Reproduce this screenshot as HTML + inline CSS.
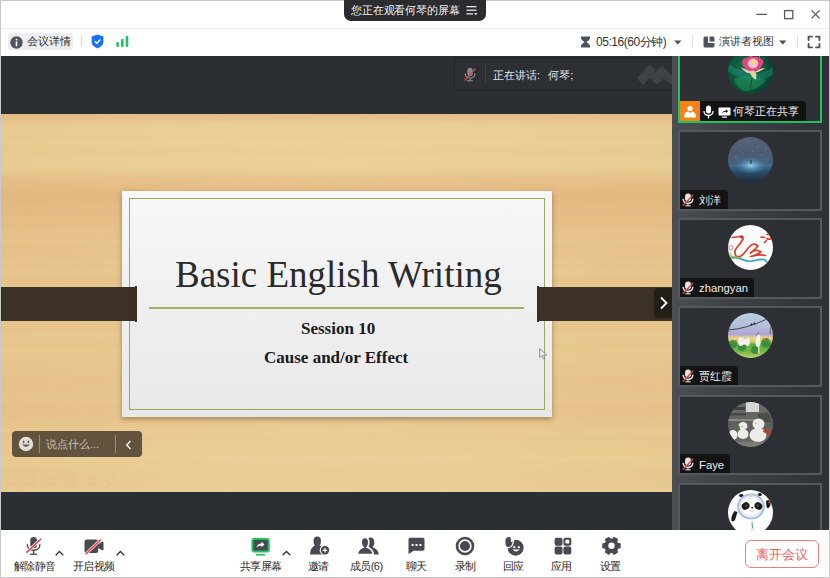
<!DOCTYPE html>
<html><head><meta charset="utf-8">
<style>
*{margin:0;padding:0;box-sizing:border-box}
html,body{width:830px;height:578px;overflow:hidden;background:#fff;font-family:"Liberation Sans",sans-serif}
.a{position:absolute}
.t{position:absolute;white-space:nowrap;line-height:1}
#tb{left:0;top:0;width:830px;height:28px;background:#fff}
#tab{z-index:10;left:344px;top:0;width:142px;height:21px;background:#2b2c2f;border-radius:0 0 7px 7px}
#bar2{left:0;top:28px;width:830px;height:28px;background:#fff;border-top:1px solid #eef0f3}
#main{left:0;top:56px;width:672px;height:474px;background:#2b2e32}
#slide{left:0;top:114px;width:672px;height:378px;overflow:hidden;background:linear-gradient(90deg,rgba(210,150,90,.08) 0%,rgba(255,240,210,.0) 25%,rgba(255,235,190,.06) 50%,rgba(255,240,210,0) 75%,rgba(210,150,90,.06) 100%),linear-gradient(180deg,rgb(229,189,133) 0px,rgb(230,194,138) 5px,rgb(233,204,147) 9px,rgb(233,206,149) 14px,rgb(233,206,149) 19px,rgb(233,205,148) 24px,rgb(234,207,150) 26px,rgb(234,207,150) 29px,rgb(233,206,149) 31px,rgb(233,204,147) 35px,rgb(233,205,148) 40px,rgb(234,207,150) 45px,rgb(234,207,150) 50px,rgb(234,207,150) 52px,rgb(233,205,148) 55px,rgb(232,202,145) 59px,rgb(230,194,138) 64px,rgb(230,193,137) 69px,rgb(229,190,134) 72px,rgb(229,189,133) 74px,rgb(229,188,132) 77px,rgb(228,185,130) 82px,rgb(229,187,131) 84px,rgb(229,187,131) 87px,rgb(229,190,134) 92px,rgb(229,188,133) 94px,rgb(229,189,133) 96px,rgb(229,189,134) 99px,rgb(229,187,132) 101px,rgb(230,191,135) 103px,rgb(230,191,135) 105px,rgb(230,192,136) 109px,rgb(230,193,137) 114px,rgb(231,195,139) 117px,rgb(231,196,139) 120px,rgb(230,194,138) 124px,rgb(231,198,141) 126px,rgb(232,199,142) 128px,rgb(231,196,139) 132px,rgb(231,197,140) 135px,rgb(231,198,142) 138px,rgb(231,195,139) 141px,rgb(231,198,142) 144px,rgb(232,200,144) 148px,rgb(231,196,140) 152px,rgb(232,200,143) 154px,rgb(232,200,143) 159px,rgb(232,200,144) 161px,rgb(231,196,140) 165px,rgb(231,198,142) 170px,rgb(232,201,145) 172px,rgb(232,201,144) 175px,rgb(232,202,145) 178px,rgb(232,200,144) 183px,rgb(232,200,144) 186px,rgb(232,202,145) 188px,rgb(232,199,143) 193px,rgb(232,199,143) 195px,rgb(232,199,143) 198px,rgb(231,198,141) 201px,rgb(231,198,142) 205px,rgb(231,198,142) 208px,rgb(232,200,143) 211px,rgb(231,198,142) 214px,rgb(232,202,145) 219px,rgb(232,202,146) 222px,rgb(232,202,146) 227px,rgb(232,199,142) 231px,rgb(233,203,146) 236px,rgb(233,203,146) 238px,rgb(232,201,144) 240px,rgb(232,202,145) 243px,rgb(232,201,144) 247px,rgb(232,199,143) 252px,rgb(232,200,143) 257px,rgb(232,200,143) 259px,rgb(231,197,141) 263px,rgb(231,196,140) 268px,rgb(231,198,142) 271px,rgb(231,196,139) 274px,rgb(231,198,142) 276px,rgb(231,198,142) 280px,rgb(232,199,142) 282px,rgb(231,197,140) 285px,rgb(232,199,143) 288px,rgb(231,195,139) 291px,rgb(231,196,140) 294px,rgb(231,196,140) 299px,rgb(231,197,141) 302px,rgb(231,198,142) 304px,rgb(231,197,141) 307px,rgb(232,201,145) 309px,rgb(232,199,143) 311px,rgb(232,201,144) 314px,rgb(233,203,146) 316px,rgb(232,202,146) 321px,rgb(232,200,144) 323px,rgb(232,201,145) 326px,rgb(233,204,148) 329px,rgb(233,203,146) 333px,rgb(233,203,146) 337px,rgb(233,203,147) 339px,rgb(234,207,150) 344px,rgb(233,205,149) 348px,rgb(233,204,147) 350px,rgb(234,207,150) 352px,rgb(232,202,146) 354px,rgb(233,203,147) 358px,rgb(232,202,146) 362px,rgb(233,205,148) 367px,rgb(232,202,146) 371px,rgb(233,204,147) 373px,rgb(233,206,149) 378px)}
#card{left:122px;top:191px;width:430px;height:226px;background:linear-gradient(180deg,#f7f7f7,#e8e8e8);box-shadow:0 2px 5px rgba(80,50,15,.45)}
#inner{left:129px;top:198px;width:416px;height:212px;border:1.6px solid #98aa5c}
#hr{left:149px;top:307px;width:375px;height:1.7px;background:#a0af68}
.band{background:#3c3127;height:34px;top:287px}
#side{left:672px;top:56px;width:158px;height:474px;background:linear-gradient(90deg,#4b4e53 0%,#3d4045 40%,#2e3135 100%);overflow:hidden}
.tile{position:absolute;left:6px;width:144px;height:80.6px;background:#2c2f33;border:2px solid #55585d}
.av{position:absolute;left:48px;top:5px;width:45px;height:45px;border-radius:50%;overflow:hidden}
.nb{position:absolute;left:0;bottom:0;height:19px;background:#131313;border-top-right-radius:4px}
.nm{position:absolute;top:5.5px;color:#eee;font-size:11.3px;line-height:11px;white-space:nowrap}
#bot{left:0;top:530px;width:830px;height:48px;background:#fff}
.lbl{position:absolute;top:561px;font-size:11px;line-height:11px;color:#2a2a2a;white-space:nowrap;letter-spacing:-0.6px}
#frame{z-index:5;left:0;top:0;width:830px;height:578px;border:1px solid #c9c9c9;pointer-events:none}
</style></head><body>
<!-- title bar -->
<div class="a" id="tb"></div>
<div class="a" id="tab"></div>
<div class="t" style="z-index:11;left:351px;top:5px;font-size:11px;letter-spacing:-0.15px;color:#f2f2f2">您正在观看何琴的屏幕</div>
<svg class="a" style="z-index:11;left:466px;top:5px" width="12" height="11" viewBox="0 0 12 11"><g fill="#e8e8e8"><rect x="0.5" y="1" width="10" height="1.3"/><rect x="0.5" y="4.6" width="10" height="1.3"/><rect x="0.5" y="8.2" width="6.5" height="1.3"/><path d="M8 8 L11.5 8 L9.75 10.2Z"/></g></svg>
<svg class="a" style="left:750px;top:6px" width="75" height="16" viewBox="0 0 75 16">
<g stroke="#555a60" stroke-width="1.3" fill="none">
<line x1="6.3" y1="8.4" x2="17.1" y2="8.4"/>
<rect x="34.6" y="4.6" width="8.2" height="8"/>
<line x1="61.6" y1="4.4" x2="69.6" y2="12.4"/><line x1="69.6" y1="4.4" x2="61.6" y2="12.4"/>
</g></svg>

<!-- toolbar row 2 -->
<div class="a" id="bar2"></div>
<div class="a" style="left:8px;top:33px;width:65px;height:17px;background:#eceef2;border-radius:3px"></div>
<svg class="a" style="left:10px;top:36px" width="13" height="13" viewBox="0 0 13 13"><circle cx="6.5" cy="6.5" r="6.2" fill="#50555f"/><rect x="5.7" y="5.4" width="1.6" height="4.8" fill="#fff"/><circle cx="6.5" cy="3.6" r="0.95" fill="#fff"/></svg>
<div class="t" style="left:27px;top:36px;font-size:11px;color:#2a2a2a">会议详情</div>
<div class="a" style="left:81px;top:36px;width:1px;height:11px;background:#d6d8dc"></div>
<svg class="a" style="left:91px;top:34px" width="13" height="15" viewBox="0 0 13 15"><path d="M6.5 0.6 L12.4 2.6 L12.4 8 C12.4 11 9.8 13 6.5 14.4 C3.2 13 0.6 11 0.6 8 L0.6 2.6Z" fill="#1c6ff2"/><path d="M3.8 7.4 L5.8 9.3 L9.3 5.6" stroke="#fff" stroke-width="1.5" fill="none"/></svg>
<svg class="a" style="left:116px;top:36px" width="13" height="11" viewBox="0 0 13 11"><g fill="#1dc35b"><rect x="0.3" y="6" width="2.6" height="5" rx="1"/><rect x="5" y="3" width="2.6" height="8" rx="1"/><rect x="9.7" y="0" width="2.6" height="11" rx="1"/></g></svg>

<svg class="a" style="left:580px;top:36px" width="11" height="12" viewBox="0 0 11 12"><path d="M1 0.5 H10 V2 C10 4 7.5 5 6.5 6 C7.5 7 10 8 10 10 V11.5 H1 V10 C1 8 3.5 7 4.5 6 C3.5 5 1 4 1 2Z" fill="#4d5360"/></svg>
<div class="t" style="left:596px;top:36px;font-size:12px;letter-spacing:-0.45px;color:#333">05:16(60分钟)</div>
<svg class="a" style="left:674px;top:40px" width="8" height="5" viewBox="0 0 8 5"><path d="M0 0.5 H7.5 L3.75 4.5Z" fill="#4d5360"/></svg>
<div class="a" style="left:692px;top:35px;width:1px;height:13px;background:#dcdee2"></div>
<svg class="a" style="left:703px;top:36px" width="12" height="12" viewBox="0 0 12 12"><path d="M0.5 2 Q0.5 0.5 2 0.5 H5 V7 H11.5 V10 Q11.5 11.5 10 11.5 H2 Q0.5 11.5 0.5 10Z M6.5 0.5 H10 Q11.5 0.5 11.5 2 V5.5 H6.5Z" fill="#4d5360"/></svg>
<div class="t" style="left:719px;top:36px;font-size:11px;color:#333">演讲者视图</div>
<svg class="a" style="left:779px;top:40px" width="8" height="5" viewBox="0 0 8 5"><path d="M0 0.5 H7.5 L3.75 4.5Z" fill="#4d5360"/></svg>
<div class="a" style="left:797px;top:35px;width:1px;height:13px;background:#dcdee2"></div>
<svg class="a" style="left:807px;top:35px" width="14" height="14" viewBox="0 0 14 14"><g stroke="#4d5360" stroke-width="1.9" fill="none" stroke-linecap="round" stroke-linejoin="round"><path d="M1.6 5 V1.6 H5"/><path d="M9 1.6 H12.4 V5"/><path d="M12.4 9 V12.4 H9"/><path d="M5 12.4 H1.6 V9"/></g></svg>

<!-- main -->
<div class="a" id="main"></div>
<div class="a" style="left:454px;top:57px;width:218px;height:34px;background:#2c2f33;border:1px solid #232528;border-right:none"></div>
<svg class="a" style="left:463px;top:67px" width="14" height="15" viewBox="0 0 14 15"><g fill="#85888d"><rect x="4.3" y="0.8" width="5.4" height="8.5" rx="2.7"/><path d="M2.2 6.5 Q2.2 11 7 11 Q11.8 11 11.8 6.5" stroke="#85888d" stroke-width="1.2" fill="none"/><rect x="6.4" y="11" width="1.2" height="2.5"/><rect x="4" y="13.2" width="6" height="1.1"/></g><line x1="1.5" y1="13.5" x2="12.5" y2="1.5" stroke="#d9453c" stroke-width="1.3"/></svg>
<div class="a" style="left:485px;top:65px;width:1px;height:18px;background:#3e4146"></div>
<div class="t" style="left:493px;top:70px;font-size:11px;color:#e6e6e6">正在讲话:&nbsp;&nbsp;<span style="margin-left:2px">何琴;</span></div>
<svg class="a" style="left:625px;top:58px" width="47" height="32" viewBox="0 0 47 32"><g fill="#3f4246" stroke="#3f4246" stroke-width="2" stroke-linejoin="round"><path d="M13 20 L24.4 8 L29.5 13 L18 25.5Z"/><path d="M26 20 L37 9 L46 18 L46 25 L38.5 19.5 L31.5 25.5Z"/></g></svg>

<div class="a" id="slide"></div>
<div class="a" id="card"></div>
<div class="a" id="inner"></div>
<div class="a" id="hr"></div>
<div class="a band" style="left:1px;width:136px"></div>
<div class="a" style="left:135px;top:286px;width:2px;height:36px;background:#3a2f25"></div>
<div class="a band" style="left:537px;width:135px"></div>
<div class="a" style="left:537px;top:286px;width:2px;height:36px;background:#3a2f25"></div>
<div class="t" id="title" style="left:175px;top:256px;font-family:'Liberation Serif',serif;font-size:37px;color:#2a2a2a">Basic English Writing</div>
<div class="t" id="s1" style="left:301px;top:320px;font-family:'Liberation Serif',serif;font-weight:bold;font-size:17px;color:#1a1a1a">Session 10</div>
<div class="t" id="s2" style="left:264px;top:349px;font-family:'Liberation Serif',serif;font-weight:bold;font-size:17px;color:#1a1a1a">Cause and/or Effect</div>
<svg class="a" style="left:539px;top:348px" width="9" height="12" viewBox="0 0 9 12"><path d="M0.7 0.7 L0.7 9.5 L3 7.5 L4.6 11 L6 10.4 L4.5 7 L7.6 7 Z" fill="#f4f4f4" stroke="#777" stroke-width="0.8"/></svg>
<div class="a" style="left:654px;top:288px;width:18px;height:30px;background:#241e19;border-radius:4px 0 0 4px"></div>
<svg class="a" style="left:659px;top:296px" width="10" height="14" viewBox="0 0 10 14"><path d="M2 1.5 L7.5 7 L2 12.5" stroke="#fff" stroke-width="1.8" fill="none"/></svg>

<!-- chat input -->
<svg class="a" style="left:0;top:473px" width="130" height="16" viewBox="0 0 130 16"><circle cx="11" cy="8" r="4" fill="none" stroke="rgba(160,125,80,.09)" stroke-width="1"/><circle cx="31" cy="8" r="4" fill="none" stroke="rgba(160,125,80,.09)" stroke-width="1"/><circle cx="51" cy="8" r="4" fill="none" stroke="rgba(160,125,80,.09)" stroke-width="1"/><circle cx="71" cy="8" r="4" fill="none" stroke="rgba(160,125,80,.09)" stroke-width="1"/><circle cx="91" cy="8" r="4" fill="none" stroke="rgba(160,125,80,.09)" stroke-width="1"/><circle cx="111" cy="8" r="4" fill="none" stroke="rgba(160,125,80,.09)" stroke-width="1"/></svg>
<div class="a" style="left:12px;top:431px;width:130px;height:26px;background:rgba(60,50,38,.78);border-radius:4px"></div>
<svg class="a" style="left:18px;top:436px" width="16" height="16" viewBox="0 0 16 16"><circle cx="8" cy="8" r="7.2" fill="#e2ded8"/><ellipse cx="5.6" cy="6" rx="0.9" ry="1.4" fill="#6b5d4b"/><ellipse cx="10.4" cy="6" rx="0.9" ry="1.4" fill="#6b5d4b"/><path d="M4.2 8.6 Q8 13.4 11.8 8.6Z" fill="#6b5d4b"/></svg>
<div class="a" style="left:39px;top:435px;width:1px;height:18px;background:#9b8c77"></div>
<div class="t" style="left:46px;top:439px;font-size:11px;color:#cbc3b6">说点什么...</div>
<div class="a" style="left:115px;top:435px;width:1px;height:18px;background:#9b8c77"></div>
<svg class="a" style="left:124px;top:440px" width="9" height="10" viewBox="0 0 9 10"><path d="M6.5 1 L2.8 5 L6.5 9" stroke="#eee" stroke-width="1.5" fill="none"/></svg>

<!-- side panel -->
<div class="a" id="side">
 <div class="tile" style="top:-13px;height:80px;border-color:#1fc25e">
  <div class="av" style="top:4px">
   <svg width="45" height="45" viewBox="0 0 45 45"><defs><radialGradient id="lg1" cx="0.4" cy="0.45" r="0.7"><stop offset="0" stop-color="#17704c"/><stop offset="0.6" stop-color="#0c5238"/><stop offset="1" stop-color="#083626"/></radialGradient></defs>
   <rect width="45" height="45" fill="url(#lg1)"/>
   <path d="M0 14 Q10 22 22 24 Q35 26 45 18 L45 26 Q30 34 18 30 Q6 27 0 22Z" fill="#1b9a86" opacity=".4"/>
   <path d="M6 30 Q20 24 38 31 Q30 42 16 42 Q8 38 6 30Z" fill="#1f9560" opacity=".55"/>
   <path d="M24 29 Q22.5 37 22 45" stroke="#1d4a2a" stroke-width="1" fill="none"/>
   <path d="M13 18.5 Q19 20 24.5 24 Q18 25.5 13 18.5Z M37.5 19 Q31.5 23.5 25.5 24 Q31 19 37.5 19Z" fill="#f0c3b3"/><path d="M14 14 Q14.5 8 20 8.5 Q22.5 5.5 25.5 8 Q31.5 6.5 35.5 12 Q34.5 20.5 25 22.5 Q15.5 21 14 14Z" fill="#e2457f"/><ellipse cx="25" cy="14.5" rx="5.2" ry="5" fill="#f6bfd2"/><circle cx="25" cy="13.5" r="2" fill="#f0dc4c"/><path d="M21.5 22 Q24 30 28 30.5 Q29.5 24 26 21.5Z" fill="#e8cfa0"/>
   <g fill="#9fd6c0" opacity=".5"><rect x="32" y="3" width="1" height="1"/><rect x="34" y="5" width="1" height="1"/><rect x="31" y="7" width="1" height="1"/><rect x="35" y="9" width="1" height="1"/></g>
   </svg>
  </div>
  <div class="nb" style="width:126px;height:20px">
   <div class="a" style="left:0;top:0;width:20px;height:20px;background:#f38219"></div>
   <svg class="a" style="left:3px;top:4px" width="14" height="13" viewBox="0 0 14 13"><circle cx="7" cy="3.5" r="2.6" fill="#fff"/><path d="M1 12.5 Q1 7 5 6.6 L7 8 L9 6.6 Q13 7 13 12.5Z" fill="#fff"/></svg>
   <svg class="a" style="left:23px;top:4px" width="11" height="14" viewBox="0 0 11 14"><rect x="3" y="0.5" width="5" height="8" rx="2.5" fill="#fff"/><path d="M1 6 Q1 10.5 5.5 10.5 Q10 10.5 10 6" stroke="#fff" stroke-width="1.3" fill="none"/><rect x="4.9" y="10.5" width="1.2" height="3" fill="#fff"/></svg>
   <svg class="a" style="left:38px;top:6px" width="13" height="11" viewBox="0 0 13 11"><rect x="0.5" y="0.5" width="12" height="8" rx="1" fill="#fff"/><rect x="4" y="9.5" width="5" height="1.2" fill="#fff"/><path d="M4 6 Q5 3.5 8 3.5 L8 2.3 L10 4.2 L8 6 L8 4.8 Q6 4.8 4 6Z" fill="#131313"/></svg>
   <div class="nm" style="left:53px;top:5px">何琴正在共享</div>
  </div>
 </div>
 <div class="tile" style="top:74px">
  <div class="av"><svg width="45" height="45" viewBox="0 0 45 45"><defs><linearGradient id="n1" x1="0" y1="0" x2="0" y2="1"><stop offset="0" stop-color="#5a6577"/><stop offset="0.35" stop-color="#4c5c72"/><stop offset="0.6" stop-color="#46637f"/><stop offset="0.62" stop-color="#1d2a36"/><stop offset="0.64" stop-color="#3a6a8e"/><stop offset="0.8" stop-color="#284760"/><stop offset="1" stop-color="#1b3144"/></linearGradient><radialGradient id="n2" cx="0.5" cy="0.5" r="0.5"><stop offset="0" stop-color="#9fd2ea"/><stop offset="0.4" stop-color="#5f9fc4" stop-opacity=".7"/><stop offset="1" stop-color="#3d7aa5" stop-opacity="0"/></radialGradient></defs><rect width="45" height="45" fill="url(#n1)"/><ellipse cx="23" cy="28.5" rx="16" ry="9" fill="url(#n2)"/><rect x="0" y="27.6" width="45" height="0.8" fill="#7fc0e6" opacity=".7"/><g fill="#c9c3cf" opacity=".55"><circle cx="12" cy="8" r=".5"/><circle cx="20" cy="5" r=".6"/><circle cx="30" cy="9" r=".5"/><circle cx="25" cy="14" r=".6"/><circle cx="15" cy="16" r=".5"/><circle cx="34" cy="18" r=".5"/><circle cx="8" cy="20" r=".5"/><circle cx="38" cy="12" r=".5"/></g><rect x="22.5" y="23" width="1" height="4" fill="#1a2430"/></svg></div>
  <div class="nb" style="width:48px"><svg class="a" style="left:2px;top:3px" width="12" height="14" viewBox="0 0 12 14"><rect x="3" y="0.5" width="6" height="8" rx="3" fill="#e6e6e6"/><path d="M1.2 5.8 Q1.2 10.3 6 10.3 Q10.8 10.3 10.8 5.8" stroke="#e6e6e6" stroke-width="1.4" fill="none"/><rect x="5.4" y="10.3" width="1.2" height="2.3" fill="#ddd"/><rect x="3.3" y="12.3" width="5.4" height="1.1" fill="#ddd"/><line x1="0.8" y1="12.8" x2="11.2" y2="1.8" stroke="#e0463d" stroke-width="1.3"/></svg><div class="nm" style="left:19px">刘洋</div></div>
 </div>
 <div class="tile" style="top:162.2px">
  <div class="av" style="background:#fbfbfb"><svg width="45" height="45" viewBox="0 0 45 45"><g fill="none" stroke="#d9402f" stroke-width="1.7" stroke-linecap="round" stroke-linejoin="round"><path d="M4.2 12.5 L12 11.5"/><path d="M12 11.5 Q15.5 10 15 14 Q13 18 8.5 23 Q5.5 27 8 31 Q11 33 15 29.5 Q19 24.5 22.5 20.5 Q27 17.5 30 21 Q27 24.5 22.5 28 Q28 23.5 33 27 Q29 30 22.5 31.5 Q31 29 37.5 30.5"/><path d="M33 12 L36.5 12.5"/><path d="M39 9.5 Q42.5 8.5 43 13.5 Q41 15 39 13.5"/><path d="M36.5 17.5 L38.5 15.5"/></g><circle cx="13.4" cy="12.4" r="0.8" fill="#2a1a1a"/><path d="M0 33 Q7 32 13 34 Q20 37.5 27 35.5 Q34 33.5 37 35 Q39 37 40 39" stroke="#3aa0c6" stroke-width="1.6" fill="none"/><path d="M1.5 30.5 Q8 33 13.5 32.5" stroke="#8ccc3a" stroke-width="1.1" fill="none"/><path d="M2.5 28 L4 34" stroke="#8ccc3a" stroke-width="1" fill="none"/><circle cx="2.8" cy="22.6" r="2" fill="none" stroke="#e77a7a" stroke-width="1"/></svg></div>
  <div class="nb" style="width:74px"><svg class="a" style="left:2px;top:3px" width="12" height="14" viewBox="0 0 12 14"><rect x="3" y="0.5" width="6" height="8" rx="3" fill="#e6e6e6"/><path d="M1.2 5.8 Q1.2 10.3 6 10.3 Q10.8 10.3 10.8 5.8" stroke="#e6e6e6" stroke-width="1.4" fill="none"/><rect x="5.4" y="10.3" width="1.2" height="2.3" fill="#ddd"/><rect x="3.3" y="12.3" width="5.4" height="1.1" fill="#ddd"/><line x1="0.8" y1="12.8" x2="11.2" y2="1.8" stroke="#e0463d" stroke-width="1.3"/></svg><div class="nm" style="left:19px">zhangyan</div></div>
 </div>
 <div class="tile" style="top:250.4px">
  <div class="av"><svg width="45" height="45" viewBox="0 0 45 45"><defs><linearGradient id="p1" x1="0" y1="0" x2="0" y2="1"><stop offset="0" stop-color="#b8d0dc"/><stop offset="0.3" stop-color="#b4bedb"/><stop offset="0.48" stop-color="#aea6d2"/><stop offset="0.55" stop-color="#e8d48a"/><stop offset="0.62" stop-color="#e5cf78"/><stop offset="0.7" stop-color="#5fae45"/><stop offset="0.85" stop-color="#6fb84a"/><stop offset="1" stop-color="#c9cf6a"/></linearGradient></defs><rect width="45" height="45" fill="url(#p1)"/><path d="M0 17 Q18 16 39 6" stroke="#2a2a2a" stroke-width="0.8" fill="none"/><circle cx="23.5" cy="11.5" r="1" fill="#222"/><circle cx="26.5" cy="10.5" r="1" fill="#222"/><path d="M43 13 L42 21" stroke="#555" stroke-width=".8"/><g fill="#2f8a35" opacity=".85"><circle cx="5" cy="31" r="4"/><circle cx="14" cy="34" r="4"/><circle cx="38" cy="30" r="5"/><circle cx="27" cy="37" r="4"/></g><g fill="#e07a2a"><circle cx="8" cy="28" r="1"/><circle cx="36" cy="26" r="1.2"/><circle cx="42" cy="28" r="1"/></g><g fill="#f4f2ee"><ellipse cx="13" cy="28.5" rx="2.8" ry="4.5"/><ellipse cx="19.5" cy="29" rx="2.3" ry="4"/><rect x="12" y="26.5" width="8" height="5" rx="2"/><ellipse cx="30" cy="29" rx="2.5" ry="5"/><circle cx="30.5" cy="23.5" r="1.8"/></g><path d="M28 23 L31 19" stroke="#555" stroke-width=".7"/><rect x="30" y="34" width="1.5" height="6" fill="#e8d9b4"/></svg></div>
  <div class="nb" style="width:58px"><svg class="a" style="left:2px;top:3px" width="12" height="14" viewBox="0 0 12 14"><rect x="3" y="0.5" width="6" height="8" rx="3" fill="#e6e6e6"/><path d="M1.2 5.8 Q1.2 10.3 6 10.3 Q10.8 10.3 10.8 5.8" stroke="#e6e6e6" stroke-width="1.4" fill="none"/><rect x="5.4" y="10.3" width="1.2" height="2.3" fill="#ddd"/><rect x="3.3" y="12.3" width="5.4" height="1.1" fill="#ddd"/><line x1="0.8" y1="12.8" x2="11.2" y2="1.8" stroke="#e0463d" stroke-width="1.3"/></svg><div class="nm" style="left:19px">贾红霞</div></div>
 </div>
 <div class="tile" style="top:338.6px">
  <div class="av"><svg width="45" height="45" viewBox="0 0 45 45"><defs><linearGradient id="f1" x1="0" y1="0" x2="0" y2="1"><stop offset="0" stop-color="#6f6f6c"/><stop offset="0.5" stop-color="#5e605c"/><stop offset="1" stop-color="#6b6b69"/></linearGradient></defs><rect width="45" height="45" fill="url(#f1)"/><rect x="18" y="0" width="13" height="10" fill="#d6d6d4"/><rect x="3" y="5" width="14" height="3" fill="#3e3e3c"/><rect x="2" y="11" width="16" height="2.5" fill="#474745"/><rect x="0" y="17" width="45" height="2" fill="#8a8a86"/><path d="M30 12 L40 10 L45 20 L30 20Z" fill="#4a4f48"/><g fill="#ecebe8"><ellipse cx="30.5" cy="22" rx="6" ry="5.5"/><ellipse cx="30" cy="33" rx="8.5" ry="7"/><ellipse cx="15" cy="24" rx="4.5" ry="4"/><ellipse cx="15" cy="32" rx="5.5" ry="5"/><ellipse cx="5" cy="33" rx="4.5" ry="5"/></g><path d="M36 27 Q40 28 43 30 L42 33 Q38 31 35 30Z" fill="#c8352e"/><g fill="#b9625a"><circle cx="28" cy="21.5" r=".6"/><circle cx="14" cy="24.5" r=".6"/></g><rect x="9" y="24" width="3" height="4" fill="#3f7a3a" opacity=".8"/><rect x="0" y="40" width="45" height="5" fill="#7b7b78"/></svg></div>
  <div class="nb" style="width:50px"><svg class="a" style="left:2px;top:3px" width="12" height="14" viewBox="0 0 12 14"><rect x="3" y="0.5" width="6" height="8" rx="3" fill="#e6e6e6"/><path d="M1.2 5.8 Q1.2 10.3 6 10.3 Q10.8 10.3 10.8 5.8" stroke="#e6e6e6" stroke-width="1.4" fill="none"/><rect x="5.4" y="10.3" width="1.2" height="2.3" fill="#ddd"/><rect x="3.3" y="12.3" width="5.4" height="1.1" fill="#ddd"/><line x1="0.8" y1="12.8" x2="11.2" y2="1.8" stroke="#e0463d" stroke-width="1.3"/></svg><div class="nm" style="left:19px">Faye</div></div>
 </div>
 <div class="tile" style="top:426.8px">
  <div class="av" style="background:#fff"><svg width="45" height="45" viewBox="0 0 45 45"><g fill="#1c1c1c"><ellipse cx="13.3" cy="5.6" rx="2.2" ry="1.7"/><ellipse cx="31.8" cy="4.6" rx="2" ry="1.6"/><path d="M6.5 21 Q3 26 3.2 30.5 Q5 32.5 7 30 Q8.5 25.5 9.5 22Z"/><path d="M38 11 Q41.5 8.5 42.6 12 Q43 16.5 40 18.5 L38.5 17Z"/><path d="M15 45 Q17 40 21 41 L21 45Z M26 45 L26 41 Q30 40 32 45Z"/></g><ellipse cx="23" cy="16.5" rx="12.8" ry="12" fill="none" stroke="#a3c2e2" stroke-width="2.2"/><ellipse cx="23" cy="16.5" rx="10.8" ry="10" fill="none" stroke="#cdb9e4" stroke-width=".9" opacity=".7"/><g fill="#1a1a1a"><ellipse cx="17.6" cy="16" rx="4" ry="3.6" transform="rotate(-30 17.6 16)"/><ellipse cx="30.4" cy="16" rx="4" ry="3.6" transform="rotate(30 30.4 16)"/><ellipse cx="24.2" cy="17.8" rx="1.1" ry=".8"/></g><g fill="#4c6a5a"><circle cx="18.3" cy="15.6" r="1"/><circle cx="29.7" cy="15.6" r="1"/></g><path d="M22 20.5 Q24 22.2 26 20.5" stroke="#e29a9a" stroke-width=".7" fill="none"/><circle cx="41" cy="12.3" r="1" fill="#d83a3a"/><path d="M24 32 L24.5 38" stroke="#3b9b8a" stroke-width="1"/><circle cx="24.4" cy="40" r="1.2" fill="none" stroke="#5b8fc0" stroke-width=".5"/></svg></div>
  
 </div>
</div>

<!-- bottom toolbar -->
<div class="a" id="bot"></div>
<svg class="a" style="left:25px;top:536px" width="18" height="20" viewBox="0 0 18 20"><rect x="5.3" y="0.9" width="6.6" height="11.4" rx="3.3" fill="#474a50"/><path d="M2.3 8.3 Q2.3 14.2 8.6 14.2 Q14.9 14.2 14.9 8.3" stroke="#474a50" stroke-width="1.4" fill="none"/><rect x="7.9" y="14" width="1.4" height="4" fill="#474a50"/><rect x="5" y="17.6" width="7.2" height="1.3" fill="#474a50"/><line x1="1.5" y1="16.6" x2="16.2" y2="2.7" stroke="#fff" stroke-width="2.8"/><line x1="1.5" y1="16.6" x2="16.2" y2="2.7" stroke="#f23d3d" stroke-width="1.5"/></svg>
<svg class="a" style="left:55px;top:550px" width="9" height="6" viewBox="0 0 9 6"><path d="M0.7 5.3 L4.5 1.5 L8.3 5.3" stroke="#333" stroke-width="1.3" fill="none"/></svg>
<div class="lbl" style="left:14px">解除静音</div>
<svg class="a" style="left:84px;top:538px" width="20" height="17" viewBox="0 0 20 17"><rect x="0.5" y="1.6" width="13.6" height="13.5" rx="2.2" fill="#474a50"/><path d="M14.1 6 L18.3 3.8 Q19.5 3.4 19.5 4.6 L19.5 11.5 Q19.5 12.6 18.3 12.2 L14.1 10Z" fill="#474a50"/><line x1="1.6" y1="16.2" x2="16.8" y2="1.6" stroke="#fff" stroke-width="2.8"/><line x1="1.6" y1="16.2" x2="16.8" y2="1.6" stroke="#f23d3d" stroke-width="1.5"/></svg>
<svg class="a" style="left:116px;top:550px" width="9" height="6" viewBox="0 0 9 6"><path d="M0.7 5.3 L4.5 1.5 L8.3 5.3" stroke="#333" stroke-width="1.3" fill="none"/></svg>
<div class="lbl" style="left:73px">开启视频</div>

<svg class="a" style="left:250px;top:537px" width="21" height="19" viewBox="0 0 21 19"><rect x="2.4" y="2" width="16.4" height="12.6" rx="2" fill="#46494f" stroke="#22c35e" stroke-width="2"/><path d="M6.5 10.5 Q7.5 6.5 11.5 6.5 L11.5 4.8 L14.5 7.6 L11.5 10.3 L11.5 8.6 Q9 8.6 6.5 10.5Z" fill="#fff"/><rect x="6" y="17" width="9" height="1.6" fill="#22c35e"/></svg>
<svg class="a" style="left:282px;top:550px" width="9" height="6" viewBox="0 0 9 6"><path d="M0.7 5.3 L4.5 1.5 L8.3 5.3" stroke="#333" stroke-width="1.3" fill="none"/></svg>
<div class="lbl" style="left:240px">共享屏幕</div>

<svg class="a" style="left:309px;top:535px" width="22" height="21" viewBox="0 0 22 21"><path d="M8.3 1.5 Q12 1.5 12 6 Q12 9 10.5 10.6 Q12.5 11.2 13.5 12 L13 19.5 L1 19.5 Q1 13 5.8 10.6 Q4.5 9 4.5 6 Q4.5 1.5 8.3 1.5Z" fill="#474a50"/><circle cx="16" cy="15.3" r="5.3" fill="#fff"/><circle cx="16" cy="15.3" r="4.2" fill="#474a50"/><path d="M16 13 V17.6 M13.7 15.3 H18.3" stroke="#fff" stroke-width="1.2"/></svg>
<div class="lbl" style="left:308px">邀请</div>

<svg class="a" style="left:357px;top:536px" width="23" height="20" viewBox="0 0 23 20"><path d="M8 1.5 Q11.8 1.5 11.8 6.5 Q11.8 9.6 10.2 11.2 Q15.8 13 16.2 18.5 L0.3 18.5 Q0.7 13 6 11.2 Q4.2 9.6 4.2 6.5 Q4.2 1.5 8 1.5Z" transform="translate(5.5,0)" fill="#474a50"/><path d="M8 1.5 Q11.8 1.5 11.8 6.5 Q11.8 9.6 10.2 11.2 Q15.8 13 16.2 18.5 L0.3 18.5 Q0.7 13 6 11.2 Q4.2 9.6 4.2 6.5 Q4.2 1.5 8 1.5Z" fill="#474a50" stroke="#fff" stroke-width="1.6"/></svg>
<div class="lbl" style="left:350px">成员(6)</div>

<svg class="a" style="left:408px;top:537px" width="17" height="18" viewBox="0 0 17 18"><path d="M2.2 0.8 H14.8 Q16.5 0.8 16.5 2.5 V12 Q16.5 13.8 14.8 13.8 H5.5 L1.2 16.8 Q0.5 17.2 0.5 16.2 V2.5 Q0.5 0.8 2.2 0.8Z" fill="#474a50"/><rect x="3.6" y="7" width="2" height="2" fill="#fff"/><rect x="7.5" y="7" width="2" height="2" fill="#fff"/><rect x="11.4" y="7" width="2" height="2" fill="#fff"/></svg>
<div class="lbl" style="left:406px">聊天</div>

<svg class="a" style="left:455px;top:536px" width="20" height="20" viewBox="0 0 20 20"><circle cx="10" cy="10" r="8" fill="none" stroke="#474a50" stroke-width="2.6"/><circle cx="10" cy="10" r="5" fill="#474a50"/></svg>
<div class="lbl" style="left:455px">录制</div>

<svg class="a" style="left:502px;top:535px" width="24" height="22" viewBox="0 0 24 22"><circle cx="13.6" cy="12.7" r="8" fill="#474a50"/><path d="M3.6 11.5 Q2.6 9.5 2.8 6.5 L3 3.8 Q3.2 2.4 4.4 2.6 Q4.8 1.2 6 1.5 Q6.9 0.6 7.9 1.5 Q9 1.3 9.3 2.6 L9.7 6 Q10.9 5 11.7 5.9 L10.4 10 Q8.8 12.8 6.2 12.6 Q4.6 12.5 3.6 11.5Z" fill="#474a50" stroke="#fff" stroke-width="1.3"/><rect x="11.3" y="11.2" width="2" height="2" fill="#fff"/><rect x="15.8" y="11.2" width="2" height="2" fill="#fff"/><path d="M10.4 14.4 Q14 18.6 17.7 14.4Z" fill="#fff"/></svg>
<div class="lbl" style="left:503px">回应</div>

<svg class="a" style="left:554px;top:537px" width="18" height="18" viewBox="0 0 18 18"><g fill="#474a50"><rect x="0.6" y="0.8" width="7.9" height="7.9" rx="2"/><rect x="9.4" y="0.8" width="7.9" height="7.9" rx="2"/><rect x="0.6" y="9.6" width="7.9" height="7.9" rx="2"/><rect x="9.4" y="9.6" width="7.9" height="7.9" rx="2"/></g><rect x="11.4" y="2.8" width="3.8" height="3.8" rx="0.6" fill="#fff"/></svg>
<div class="lbl" style="left:551px">应用</div>

<svg class="a" style="left:601px;top:535px" width="22" height="22" viewBox="-10.5 -10.8 22 22"><g fill="#474a50"><circle r="7.3"/><rect x="-2.8" y="-9.2" width="5.6" height="5" rx="1.4" transform="rotate(30)"/><rect x="-2.8" y="-9.2" width="5.6" height="5" rx="1.4" transform="rotate(90)"/><rect x="-2.8" y="-9.2" width="5.6" height="5" rx="1.4" transform="rotate(150)"/><rect x="-2.8" y="-9.2" width="5.6" height="5" rx="1.4" transform="rotate(210)"/><rect x="-2.8" y="-9.2" width="5.6" height="5" rx="1.4" transform="rotate(270)"/><rect x="-2.8" y="-9.2" width="5.6" height="5" rx="1.4" transform="rotate(330)"/></g><circle r="3.2" fill="#fff"/></svg>
<div class="lbl" style="left:600px">设置</div>

<div class="a" style="left:744.5px;top:539.5px;width:74px;height:28.5px;border:1.5px solid #f87878;border-radius:6px"></div>
<div class="t" style="left:756px;top:548.5px;font-size:12.6px;color:#f16060">离开会议</div>

<div class="a" id="frame"></div>
</body></html>
